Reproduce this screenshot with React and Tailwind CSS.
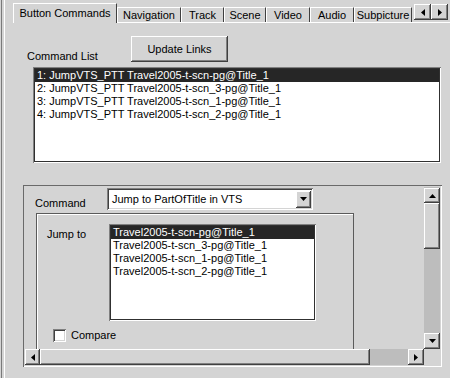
import React from "react";

const raised =
  "bg-[#d4d4d4] shadow-[inset_-1px_-1px_0_#404040,inset_1px_1px_0_#ffffff,inset_-2px_-2px_0_#808080]";
const sunken =
  "bg-white shadow-[inset_1px_1px_0_#808080,inset_-1px_-1px_0_#ffffff,inset_2px_2px_0_#303030,inset_-2px_-2px_0_#303030]";

const Arrow = ({ dir }) => {
  const pts = {
    up: "0,4 3.5,0 7,4",
    down: "0,0 7,0 3.5,4",
    left: "4,0 4,7 0,3.5",
    right: "0,0 4,3.5 0,7",
  }[dir];
  const vertical = dir === "up" || dir === "down";
  return (
    <svg width={vertical ? 7 : 4} height={vertical ? 4 : 7} viewBox={vertical ? "0 0 7 4" : "0 0 4 7"}>
      <polygon points={pts} fill="#000" />
    </svg>
  );
};

const ArrowButton = ({ dir, className = "" }) => (
  <div className={`${raised} flex items-center justify-center shrink-0 ${className}`}>
    <Arrow dir={dir} />
  </div>
);

const tabs = [
  { label: "Navigation", w: "w-[64px]" },
  { label: "Track", w: "w-[43px]" },
  { label: "Scene", w: "w-[42px]" },
  { label: "Video", w: "w-[44px]" },
  { label: "Audio", w: "w-[44px]" },
  { label: "Subpicture", w: "w-[58px]" },
];

const commands = [
  "1: JumpVTS_PTT Travel2005-t-scn-pg@Title_1",
  "2: JumpVTS_PTT Travel2005-t-scn_3-pg@Title_1",
  "3: JumpVTS_PTT Travel2005-t-scn_1-pg@Title_1",
  "4: JumpVTS_PTT Travel2005-t-scn_2-pg@Title_1",
];

const targets = [
  "Travel2005-t-scn-pg@Title_1",
  "Travel2005-t-scn_3-pg@Title_1",
  "Travel2005-t-scn_1-pg@Title_1",
  "Travel2005-t-scn_2-pg@Title_1",
];

const ListRows = ({ items }) => (
  <div className="pt-[1px] px-[2px]">
    {items.map((t, i) => (
      <div
        key={t}
        className={`h-[13px] leading-[13px] pl-[2px] whitespace-nowrap ${
          i === 0 ? "bg-[#262626] text-white" : "text-black"
        }`}
      >
        {t}
      </div>
    ))}
  </div>
);

export default function App() {
  return (
    <div className="w-[450px] h-[378px] bg-[#d4d4d4] flex overflow-hidden text-[11px] text-black font-['Liberation_Sans',Arial,sans-serif]">
      {/* left window edge */}
      <div className="w-[5px] shrink-0 flex">
        <div className="w-px" />
        <div className="w-px bg-[#7a7a7a]" />
        <div className="w-[2px]" />
        <div className="w-px bg-white" />
      </div>

      <div className="flex-1 flex flex-col min-w-0">
        {/* tab strip */}
        <div className="h-[23px] flex items-end pl-[8px] shrink-0">
          <div className="w-[104px] h-[20px] border-t border-l border-white border-r border-r-[#404040] flex items-center justify-center pb-[1px]">
            Button Commands
          </div>
          {tabs.map((t) => (
            <div key={t.label} className="border-b border-white">
              <div
                className={`${t.w} h-[15px] border-t border-l border-white border-r border-r-[#404040] flex items-center justify-center overflow-hidden whitespace-nowrap`}
              >
                {t.label}
              </div>
            </div>
          ))}
          <div className="flex-1 self-stretch flex items-start justify-end pt-[4px] pr-[2px] border-b border-white">
            <ArrowButton dir="left" className="w-[17px] h-[16px]" />
            <ArrowButton dir="right" className="w-[17px] h-[16px]" />
          </div>
        </div>

        {/* tab page */}
        <div className="flex-1 flex flex-col">
          <div className="flex items-end mt-[13px] h-[26px]">
            <div className="w-[126px] pl-[22px] leading-[13px] -mb-[1px]">Command List</div>
            <div className={`${raised} w-[97px] h-[26px] flex items-center justify-center`}>
              Update Links
            </div>
          </div>

          <div className={`${sunken} ml-[28px] mt-[5px] w-[408px] h-[96px]`}>
            <div className="pt-[1px]">
              <ListRows items={commands} />
            </div>
          </div>

          {/* lower scrolling panel */}
          <div className="ml-[18px] mt-[22px] w-[419px] h-[182px] p-[2px] shadow-[inset_1px_1px_0_#6a6a6a,inset_-1px_-1px_0_#ffffff]">
            <div className="w-full h-full grid grid-cols-[1fr_16px] grid-rows-[1fr_16px]">
              <div className="overflow-hidden">
                <div className="flex items-center pl-[10px] pt-[1px] h-[23px]">
                  <div className="w-[72px] pt-[9px]">Command</div>
                  <div className={`${sunken} w-[206px] h-[22px] flex items-center pl-[5px] pr-[2px] shadow-[inset_1px_1px_0_#808080,inset_-1px_-1px_0_#ffffff,inset_2px_2px_0_#404040,inset_-2px_-2px_0_#d4d4d4]`}>
                    <span className="flex-1 whitespace-nowrap">Jump to PartOfTitle in VTS</span>
                    <ArrowButton dir="down" className="w-[15px] h-[17px]" />
                  </div>
                </div>

                <div className="ml-[11px] mt-[3px] w-[318px] h-[170px] border border-[#5a5a5a] shadow-[inset_1px_1px_0_#ffffff]">
                  <div className="flex pt-[10px] pl-[10px]">
                    <div className="w-[62px] pt-[2px]">Jump to</div>
                    <div className={`${sunken} w-[207px] h-[97px]`}>
                      <div className="pt-[1px]">
                        <ListRows items={targets} />
                      </div>
                    </div>
                  </div>
                  <div className="flex items-center pl-[16px] mt-[6px]">
                    <div className="w-[13px] h-[13px] bg-white shadow-[inset_1px_1px_0_#808080,inset_-1px_-1px_0_#ffffff,inset_2px_2px_0_#404040,inset_-2px_-2px_0_#d4d4d4]" />
                    <span className="ml-[5px]">Compare</span>
                  </div>
                </div>
              </div>

              {/* vertical scrollbar */}
              <div className="flex flex-col bg-[#bdbdbd] pt-px">
                <ArrowButton dir="up" className="h-[15px]" />
                <div className={`${raised} h-[46px]`} />
                <div className="flex-1" />
                <ArrowButton dir="down" className="h-[16px]" />
              </div>

              {/* horizontal scrollbar */}
              <div className="flex bg-[#bdbdbd]">
                <ArrowButton dir="left" className="w-[15px]" />
                <div className={`${raised} w-[330px]`} />
                <div className="flex-1" />
                <ArrowButton dir="right" className="w-[16px]" />
              </div>
              <div className="bg-[#d4d4d4]" />
            </div>
          </div>
        </div>
      </div>
    </div>
  );
}
